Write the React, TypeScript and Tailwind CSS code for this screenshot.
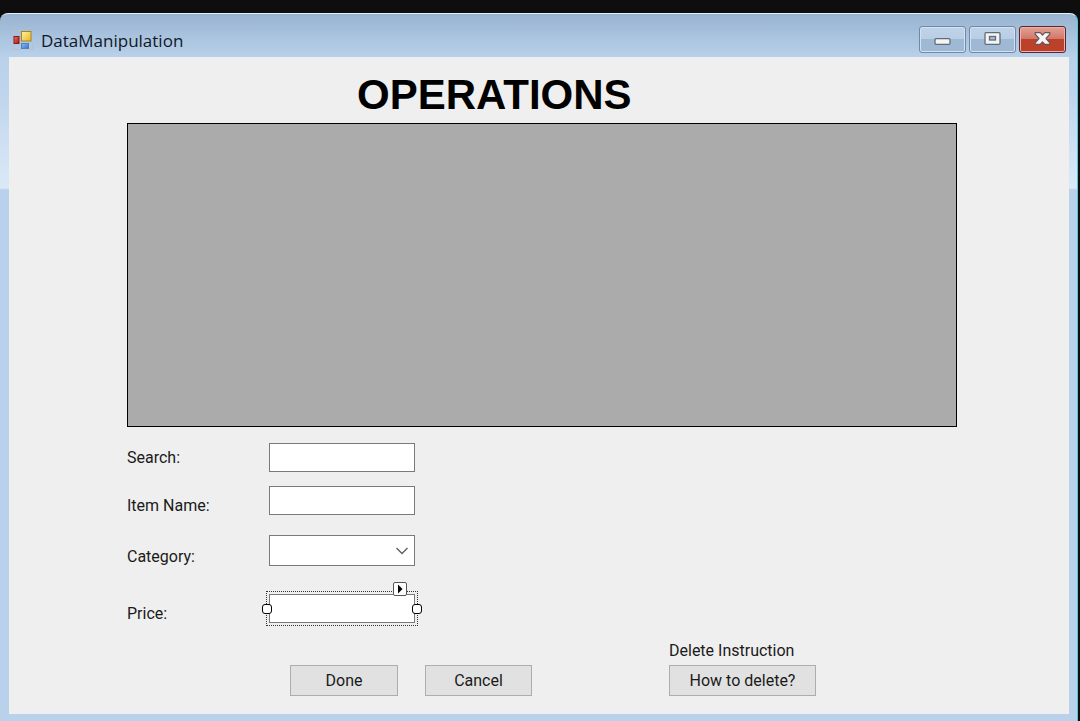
import type { ReactNode } from "react";

const field =
  "h-[29px] w-[146px] border border-[#7a7a7a] bg-white px-1 text-base text-[#1a1a1a] outline-none";
const pushButton =
  "h-[31px] border border-[#adadad] bg-[#e1e1e1] text-base leading-5 text-[#1a1a1a]";

function FormsIcon() {
  return (
    <svg className="size-5" viewBox="0 0 20 20" aria-hidden="true">
      <defs>
        <linearGradient id="yellow" x1="0" y1="0" x2="1" y2="1">
          <stop offset="0" stopColor="#fff3a0" />
          <stop offset="1" stopColor="#eeb41c" />
        </linearGradient>
        <linearGradient id="red" x1="0" y1="0" x2="1" y2="1">
          <stop offset="0" stopColor="#e9776a" />
          <stop offset="1" stopColor="#a91410" />
        </linearGradient>
        <linearGradient id="blue" x1="0" y1="0" x2="1" y2="1">
          <stop offset="0" stopColor="#8dbcf6" />
          <stop offset="1" stopColor="#3971c7" />
        </linearGradient>
      </defs>
      <path d="M0.5 6V0.5H8M0.5 15V19.5H8M19.5 13V19.5H17" fill="none" stroke="#b9bfc7" />
      <rect x="1" y="6.5" width="5" height="7" fill="url(#red)" stroke="#8d1713" />
      <rect x="8.5" y="1.5" width="9.5" height="9.5" fill="url(#yellow)" stroke="#a8841f" />
      <rect x="8.5" y="13.5" width="7" height="5" fill="url(#blue)" stroke="#5380bd" />
    </svg>
  );
}

function CaptionButton({ label, close, children }: { label: string; close?: boolean; children: ReactNode }) {
  return (
    <button
      type="button"
      aria-label={label}
      className={
        close
          ? "flex h-[27px] w-[47px] items-center justify-center rounded-[3px] border border-[#5c2630] bg-linear-to-b from-[#e3a195] from-0% via-[#d1796b] via-45% to-[#cf6a55] shadow-[inset_0_0_0_1px_#e9b4aa,inset_0_-13px_0_#bd4029]"
          : "flex h-[27px] w-[47px] items-center justify-center rounded-[3px] border border-[#7189a5] bg-linear-to-b from-[#bfd3e8] to-[#b2c9e1] shadow-[inset_0_0_0_1px_#d3e2f2,inset_0_-13px_0_#9fb9d5]"
      }
    >
      {children}
    </button>
  );
}

function TitleBar() {
  return (
    <header className="flex h-[43px] items-center justify-between pt-2 pr-[3px] pl-1">
      <div className="flex items-center gap-2">
        <FormsIcon />
        <h1 className="pt-0.5 font-['Open_Sans','Noto_Sans',sans-serif] text-[17px] leading-5 text-[#101828]">
          DataManipulation
        </h1>
      </div>
      <div className="flex gap-[3px]">
        <CaptionButton label="Minimize">
          <svg className="mt-1 h-[7px] w-[17px]" viewBox="0 0 17 7" aria-hidden="true">
            <rect x="1" y="0.7" width="15" height="5.6" rx="1" fill="#f4f4f4" stroke="#626b79" strokeWidth="1.3" />
          </svg>
        </CaptionButton>
        <CaptionButton label="Maximize">
          <svg className="mb-0.5 h-[13px] w-[17px]" viewBox="0 0 17 13" aria-hidden="true">
            <rect x="1" y="0.7" width="15" height="11.6" rx="1" fill="#f4f4f4" stroke="#626b79" strokeWidth="1.3" />
            <rect x="5.5" y="4.5" width="6" height="3.5" fill="#a9c0da" stroke="#626b79" strokeWidth="1.3" />
          </svg>
        </CaptionButton>
        <CaptionButton label="Close" close>
          <svg className="mb-0.5 h-[13px] w-[17px]" viewBox="0 0 17 13" aria-hidden="true">
            <path
              d="M1.2 0.7H6.2L8.5 3L10.8 0.7H15.8V2.2L12 6.5L15.8 10.8V12.3H10.8L8.5 10L6.2 12.3H1.2V10.8L5 6.5L1.2 2.2Z"
              fill="#f6f6f6"
              stroke="#6a545b"
              strokeWidth="1.2"
              strokeLinejoin="round"
            />
          </svg>
        </CaptionButton>
      </div>
    </header>
  );
}

function Row({ id, label, centered, children }: { id: string; label: string; centered?: boolean; children: ReactNode }) {
  return (
    <div className={centered ? "flex items-center" : "flex items-end"}>
      <label htmlFor={id} className="w-[142px] leading-[18px]">
        {label}
      </label>
      {children}
    </div>
  );
}

export default function App() {
  return (
    <div className="flex min-h-screen flex-col bg-[#0e0e0e] pt-[13px] pr-0.5 font-[Roboto,'Liberation_Sans',sans-serif] text-base text-[#1a1a1a]">
      <div className="flex flex-1 flex-col rounded-t-lg border-t border-r border-t-[#e6f1fa] border-r-[#59c5dc] bg-[linear-gradient(#99b4d1_0px,#b9d1ea_44px,#bfd5ec_80px,#dbe9f7_174px,#b9d1ea_176px)] pr-2 pb-[7px] pl-[9px]">
        <TitleBar />
        <main className="flex-1 bg-[#efefef] pr-28 pl-[118px]">
          <h2 className="pt-4 pl-[230px] font-['Liberation_Sans',Arial,sans-serif] text-[42px] leading-[44px] font-bold text-black">
            OPERATIONS
          </h2>
          <section aria-label="Records" className="mt-1.5 h-[304px] border border-black bg-[#ababab]" />

          <form className="mt-4" onSubmit={(event) => event.preventDefault()}>
            <Row id="search" label="Search:" centered>
              <input id="search" type="text" className={field} />
            </Row>
            <div className="mt-3.5">
              <Row id="item" label="Item Name:">
                <input id="item" type="text" className={field} />
              </Row>
            </div>
            <div className="mt-5">
              <Row id="category" label="Category:">
                <div className="relative">
                  <select
                    id="category"
                    className="block h-[31px] w-[146px] appearance-none border border-[#7a7a7a] bg-white pr-6 pl-1 outline-none"
                  >
                    <option></option>
                  </select>
                  <svg
                    className="pointer-events-none absolute top-3 right-1.5 h-2 w-3.5"
                    viewBox="0 0 14 8"
                    aria-hidden="true"
                  >
                    <path d="M1.5 1L7 6.5L12.5 1" fill="none" stroke="#606060" strokeWidth="1.4" />
                  </svg>
                </div>
              </Row>
            </div>
            <div className="mt-7">
              <Row id="price" label="Price:">
                <div className="relative">
                  <input id="price" type="text" className={`block ${field}`} />
                  <div className="pointer-events-none absolute -inset-[3px] border border-dotted border-[#333]" />
                  <span className="absolute top-2.5 -left-[7px] size-2.5 rounded-[3px] border-[1.5px] border-black bg-white" />
                  <span className="absolute top-2.5 -right-[7px] size-2.5 rounded-[3px] border-[1.5px] border-black bg-white" />
                  <button
                    type="button"
                    aria-label="Price tasks"
                    className="absolute -top-3 right-2 flex size-3.5 items-center justify-center rounded-[2px] border border-[#555] bg-white"
                  >
                    <svg className="h-2.5 w-1.5" viewBox="0 0 6 10" aria-hidden="true">
                      <path d="M1 0.5L5.5 5L1 9.5Z" fill="#000" />
                    </svg>
                  </button>
                </div>
              </Row>
            </div>

            <div className="mt-[18px] flex items-end pl-[163px]">
              <button type="submit" className={`w-[108px] ${pushButton}`}>
                Done
              </button>
              <button type="button" className={`ml-[27px] w-[107px] ${pushButton}`}>
                Cancel
              </button>
              <div className="ml-[137px] flex flex-col gap-1">
                <span className="leading-5">Delete Instruction</span>
                <button type="button" className={`w-[147px] ${pushButton}`}>
                  How to delete?
                </button>
              </div>
            </div>
          </form>
        </main>
      </div>
    </div>
  );
}
